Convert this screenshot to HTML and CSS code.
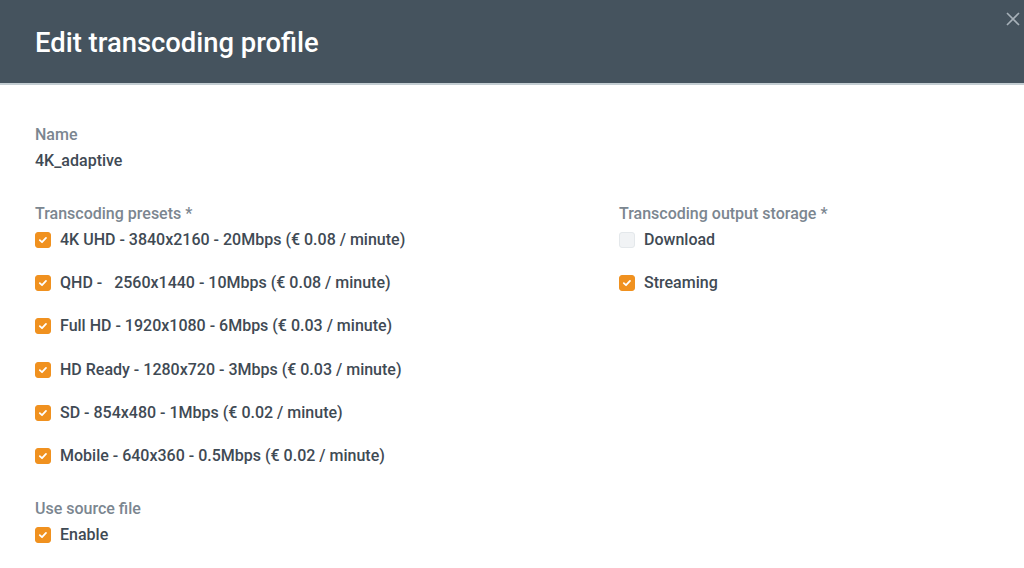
FILE: index.html
```html
<!DOCTYPE html>
<html lang="en">
<head>
    <meta charset="UTF-8">
    <meta name="viewport" content="width=device-width, initial-scale=1.0">
    <title>Edit transcoding profile</title>
    <link rel="stylesheet" href="styles.css">
</head>
<body>
    <div class="modal">
        <div class="modal-header">
            <h1>Edit transcoding profile</h1>
            <span class="close">
                <svg width="14" height="14" viewBox="0 0 14 14"><path d="M1 1L13 13M13 1L1 13" stroke="#a7b1b9" stroke-width="1.6" fill="none"/></svg>
            </span>
        </div>

        <div class="modal-body">
            <div class="field">
                <div class="label">Name</div>
                <div class="value">4K_adaptive</div>
            </div>

            <div class="columns">
                <div class="field">
                    <div class="label">Transcoding presets *</div>
                    <div class="option"><span class="check on"></span>4K UHD - 3840x2160 - 20Mbps (€ 0.08 / minute)</div>
                    <div class="option"><span class="check on"></span>QHD - &nbsp; 2560x1440 - 10Mbps (€ 0.08 / minute)</div>
                    <div class="option"><span class="check on"></span>Full HD - 1920x1080 - 6Mbps (€ 0.03 / minute)</div>
                    <div class="option"><span class="check on"></span>HD Ready - 1280x720 - 3Mbps (€ 0.03 / minute)</div>
                    <div class="option"><span class="check on"></span>SD - 854x480 - 1Mbps (€ 0.02 / minute)</div>
                    <div class="option"><span class="check on"></span>Mobile - 640x360 - 0.5Mbps (€ 0.02 / minute)</div>
                </div>
                <div class="field">
                    <div class="label">Transcoding output storage *</div>
                    <div class="option"><span class="check"></span>Download</div>
                    <div class="option"><span class="check on"></span>Streaming</div>
                </div>
            </div>

            <div class="field last">
                <div class="label">Use source file</div>
                <div class="option"><span class="check on"></span>Enable</div>
            </div>
        </div>
    </div>
</body>
</html>
```

FILE: styles.css
```css
body {
    font-family: 'Roboto', sans-serif;
    background-color: #ffffff;
    margin: 0;
    padding: 0;
}

.modal {
    width: 1024px;
}

.modal-header {
    position: relative;
    background-color: #45535e;
    height: 85px;
    border-bottom: 2px solid #c3cdd2;
    padding: 0 35px;
    box-sizing: border-box;
    display: flex;
    align-items: center;
}

.modal-header h1 {
    margin: 2px 0 0;
    color: #ffffff;
    font-size: 27.4px;
    font-weight: 500;
}

.close {
    position: absolute;
    top: 12px;
    right: 4px;
    line-height: 0;
}

.modal-body {
    padding: 39.5px 35px 0;
}

.columns {
    display: grid;
    grid-template-columns: 584px 1fr;
}

.field {
    margin-bottom: 33px;
}

.field.last {
    margin-bottom: 0;
}

.label {
    color: #7b8690;
    font-size: 16px;
    font-weight: 500;
    line-height: 20px;
    margin-bottom: 6px;
}

.value {
    color: #3f4a54;
    font-size: 16px;
    font-weight: 500;
    line-height: 20px;
}

.option {
    display: flex;
    align-items: center;
    color: #3f4a54;
    font-size: 16px;
    font-weight: 500;
    line-height: 20px;
    margin-bottom: 23.4px;
    white-space: pre;
}

.option:last-child {
    margin-bottom: 0;
}

.check {
    width: 16px;
    height: 16px;
    border-radius: 3px;
    margin-right: 9px;
    box-sizing: border-box;
    background-color: #f1f3f5;
    border: 1px solid #e4e8eb;
    flex-shrink: 0;
}

.check.on {
    background-color: #f0911f;
    border-color: #f0911f;
    background-image: url("data:image/svg+xml,%3Csvg xmlns='http://www.w3.org/2000/svg' width='16' height='16' viewBox='0 0 16 16'%3E%3Cpath d='M4.8 8.2L7 10.2L11 5.9' stroke='white' stroke-width='1.8' fill='none' stroke-linecap='round' stroke-linejoin='round'/%3E%3C/svg%3E");
    background-position: -1px -1px;
}
```
